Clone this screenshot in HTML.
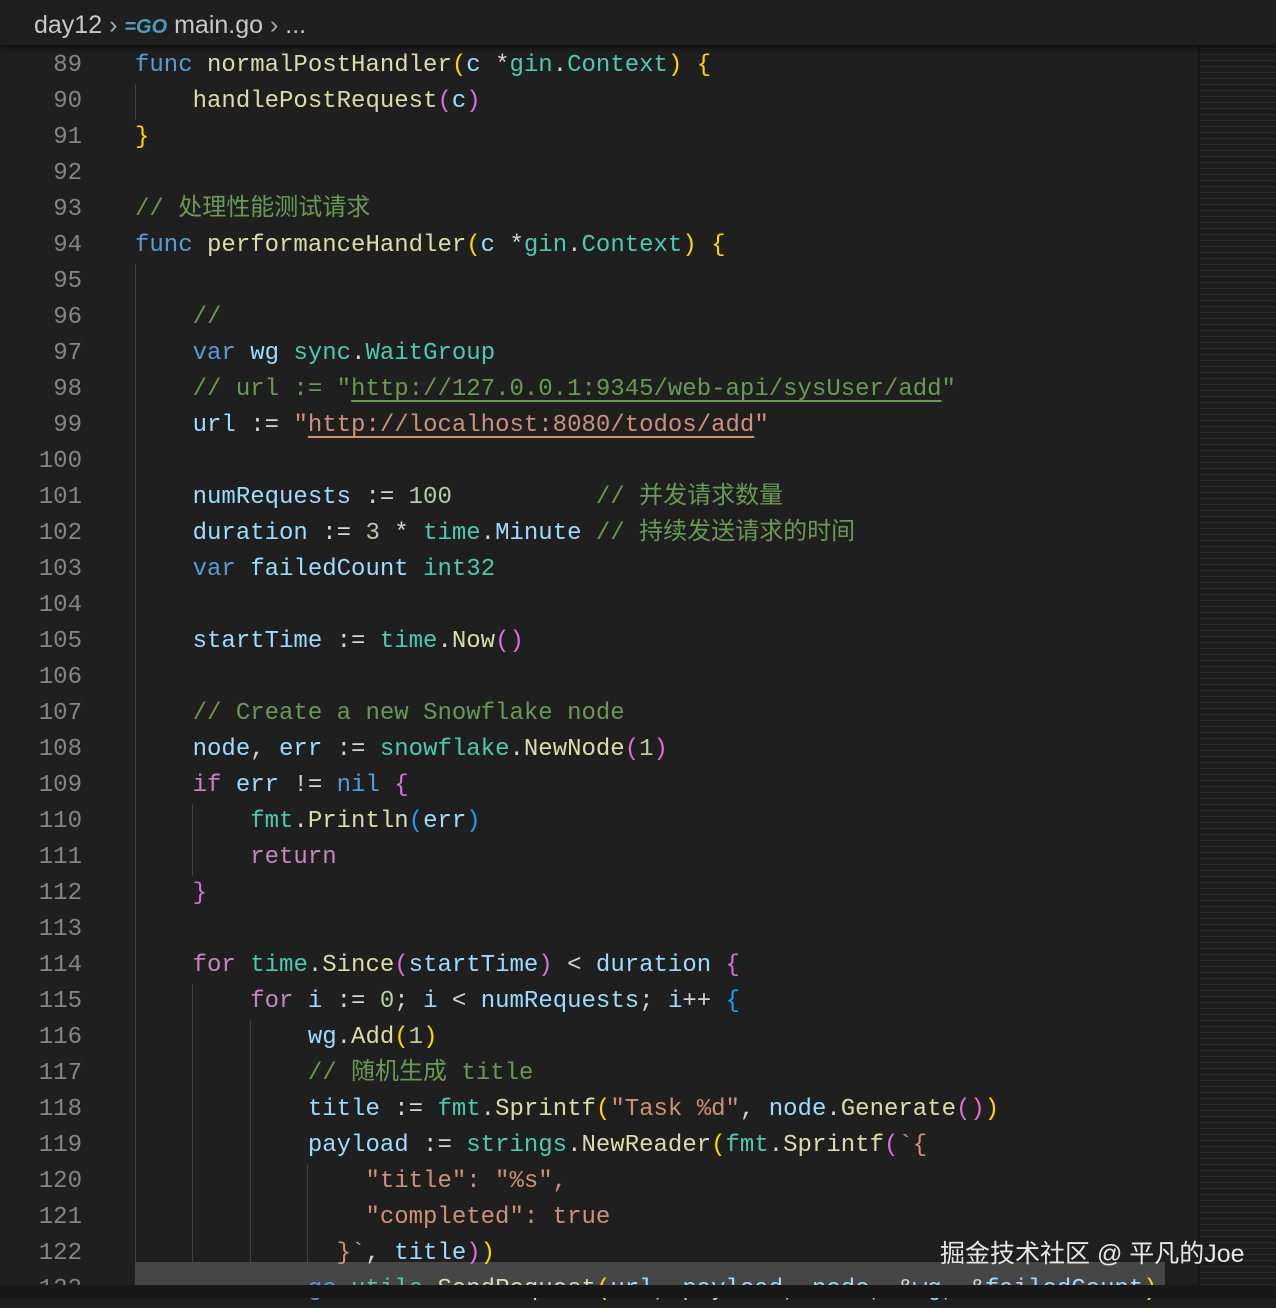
<!DOCTYPE html>
<html><head><meta charset="utf-8"><style>
body{margin:0;width:1276px;height:1298px;background:#1f1f1f;overflow:hidden;position:relative;font-family:"Liberation Mono","Noto Sans CJK SC",monospace;}
.hdr{position:absolute;left:0;top:0;width:1276px;height:45px;background:#1f1f1f;box-shadow:0 3px 6px #0008;z-index:3}
.bc{position:absolute;left:34px;top:11px;font:25px "Liberation Sans",sans-serif;color:#c8c8c8;white-space:pre}
.ln{position:absolute;left:0;width:82px;text-align:right;color:#858585;font-size:24px;line-height:36px;z-index:2}
.cd{position:absolute;left:135px;font-size:24px;line-height:36px;white-space:pre;color:#d4d4d4;z-index:2}
.k{color:#569cd6}.f{color:#dcdcaa}.v{color:#9cdcfe}.t{color:#4ec9b0}.c{color:#6a9955}.s{color:#ce9178}.n{color:#b5cea8}.p{color:#c586c0}
.b1{color:#ffd700}.b2{color:#da70d6}.b3{color:#179fff}
.u{text-decoration:underline;text-underline-offset:5px}
.g{position:absolute;width:1px;background:#404040}
.mm{position:absolute;left:1200px;top:45px;width:76px;height:1240px;background:#1c1c1c;
background-image:repeating-linear-gradient(#1c1c1c 0 3px,#2a2a2a 3px 4px,#1c1c1c 4px 6px)}
.mmL{position:absolute;left:1198px;top:45px;width:2px;height:1240px;background:#171717}
.band{position:absolute;left:135px;top:1262px;width:1030px;height:23px;background:#464646;z-index:1}
.bot{position:absolute;left:0;top:1285px;width:1276px;height:13px;background:#181818;z-index:4}
.wm{position:absolute;left:940px;top:1234px;font:25px "Liberation Sans","Noto Sans CJK SC",sans-serif;color:#e6e6e6;z-index:5}
</style></head><body>
<div class="hdr"><div class="bc">day12 <span style="color:#aaa">›</span> <span style="color:#519aba;font-weight:bold;font-style:italic;font-size:20px">=GO</span> main.go <span style="color:#aaa">›</span> ...</div></div>
<div class="mmL"></div><div class="mm"></div>
<div class="band"></div>
<div class="g" style="left:135px;top:84px;height:36px"></div>
<div class="g" style="left:135px;top:264px;height:1024px"></div>
<div class="g" style="left:192px;top:804px;height:72px"></div>
<div class="g" style="left:192px;top:984px;height:304px"></div>
<div class="g" style="left:250px;top:1020px;height:268px"></div>
<div class="g" style="left:307px;top:1164px;height:98px"></div>
<div class="ln" style="top:48px">89<br>90<br>91<br>92<br>93<br>94<br>95<br>96<br>97<br>98<br>99<br>100<br>101<br>102<br>103<br>104<br>105<br>106<br>107<br>108<br>109<br>110<br>111<br>112<br>113<br>114<br>115<br>116<br>117<br>118<br>119<br>120<br>121<br>122<br>123</div>
<div class="cd" style="top:48px"><span class="k">func</span> <span class="f">normalPostHandler</span><span class="b1">(</span><span class="v">c</span> *<span class="t">gin</span>.<span class="t">Context</span><span class="b1">)</span> <span class="b1">{</span>
    <span class="f">handlePostRequest</span><span class="b2">(</span><span class="v">c</span><span class="b2">)</span>
<span class="b1">}</span>

<span class="c">// 处理性能测试请求</span>
<span class="k">func</span> <span class="f">performanceHandler</span><span class="b1">(</span><span class="v">c</span> *<span class="t">gin</span>.<span class="t">Context</span><span class="b1">)</span> <span class="b1">{</span>

    <span class="c">//</span>
    <span class="k">var</span> <span class="v">wg</span> <span class="t">sync</span>.<span class="t">WaitGroup</span>
    <span class="c">// url := "<span class="u">http://127.0.0.1:9345/web-api/sysUser/add</span>"</span>
    <span class="v">url</span> := <span class="s">"<span class="u">http://localhost:8080/todos/add</span>"</span>

    <span class="v">numRequests</span> := <span class="n">100</span>          <span class="c">// 并发请求数量</span>
    <span class="v">duration</span> := <span class="n">3</span> * <span class="t">time</span>.<span class="v">Minute</span> <span class="c">// 持续发送请求的时间</span>
    <span class="k">var</span> <span class="v">failedCount</span> <span class="t">int32</span>

    <span class="v">startTime</span> := <span class="t">time</span>.<span class="f">Now</span><span class="b2">()</span>

    <span class="c">// Create a new Snowflake node</span>
    <span class="v">node</span>, <span class="v">err</span> := <span class="t">snowflake</span>.<span class="f">NewNode</span><span class="b2">(</span><span class="n">1</span><span class="b2">)</span>
    <span class="p">if</span> <span class="v">err</span> != <span class="k">nil</span> <span class="b2">{</span>
        <span class="t">fmt</span>.<span class="f">Println</span><span class="b3">(</span><span class="v">err</span><span class="b3">)</span>
        <span class="p">return</span>
    <span class="b2">}</span>

    <span class="p">for</span> <span class="t">time</span>.<span class="f">Since</span><span class="b2">(</span><span class="v">startTime</span><span class="b2">)</span> &lt; <span class="v">duration</span> <span class="b2">{</span>
        <span class="p">for</span> <span class="v">i</span> := <span class="n">0</span>; <span class="v">i</span> &lt; <span class="v">numRequests</span>; <span class="v">i</span>++ <span class="b3">{</span>
            <span class="v">wg</span>.<span class="f">Add</span><span class="b1">(</span><span class="n">1</span><span class="b1">)</span>
            <span class="c">// 随机生成 title</span>
            <span class="v">title</span> := <span class="t">fmt</span>.<span class="f">Sprintf</span><span class="b1">(</span><span class="s">"Task %d"</span>, <span class="v">node</span>.<span class="f">Generate</span><span class="b2">()</span><span class="b1">)</span>
            <span class="v">payload</span> := <span class="t">strings</span>.<span class="f">NewReader</span><span class="b1">(</span><span class="t">fmt</span>.<span class="f">Sprintf</span><span class="b2">(</span><span class="s">`{</span>
<span class="s">                "title": "%s",</span>
<span class="s">                "completed": true</span>
<span class="s">              }`</span>, <span class="v">title</span><span class="b2">)</span><span class="b1">)</span>
            <span class="k">go</span> <span class="t">utils</span>.<span class="f">SendRequest</span><span class="b1">(</span><span class="v">url</span>, <span class="v">payload</span>, <span class="v">node</span>, &amp;<span class="v">wg</span>, &amp;<span class="v">failedCount</span><span class="b1">)</span></div>
<div class="bot"></div>
<div class="wm">掘金技术社区 @ 平凡的Joe</div>
</body></html>
